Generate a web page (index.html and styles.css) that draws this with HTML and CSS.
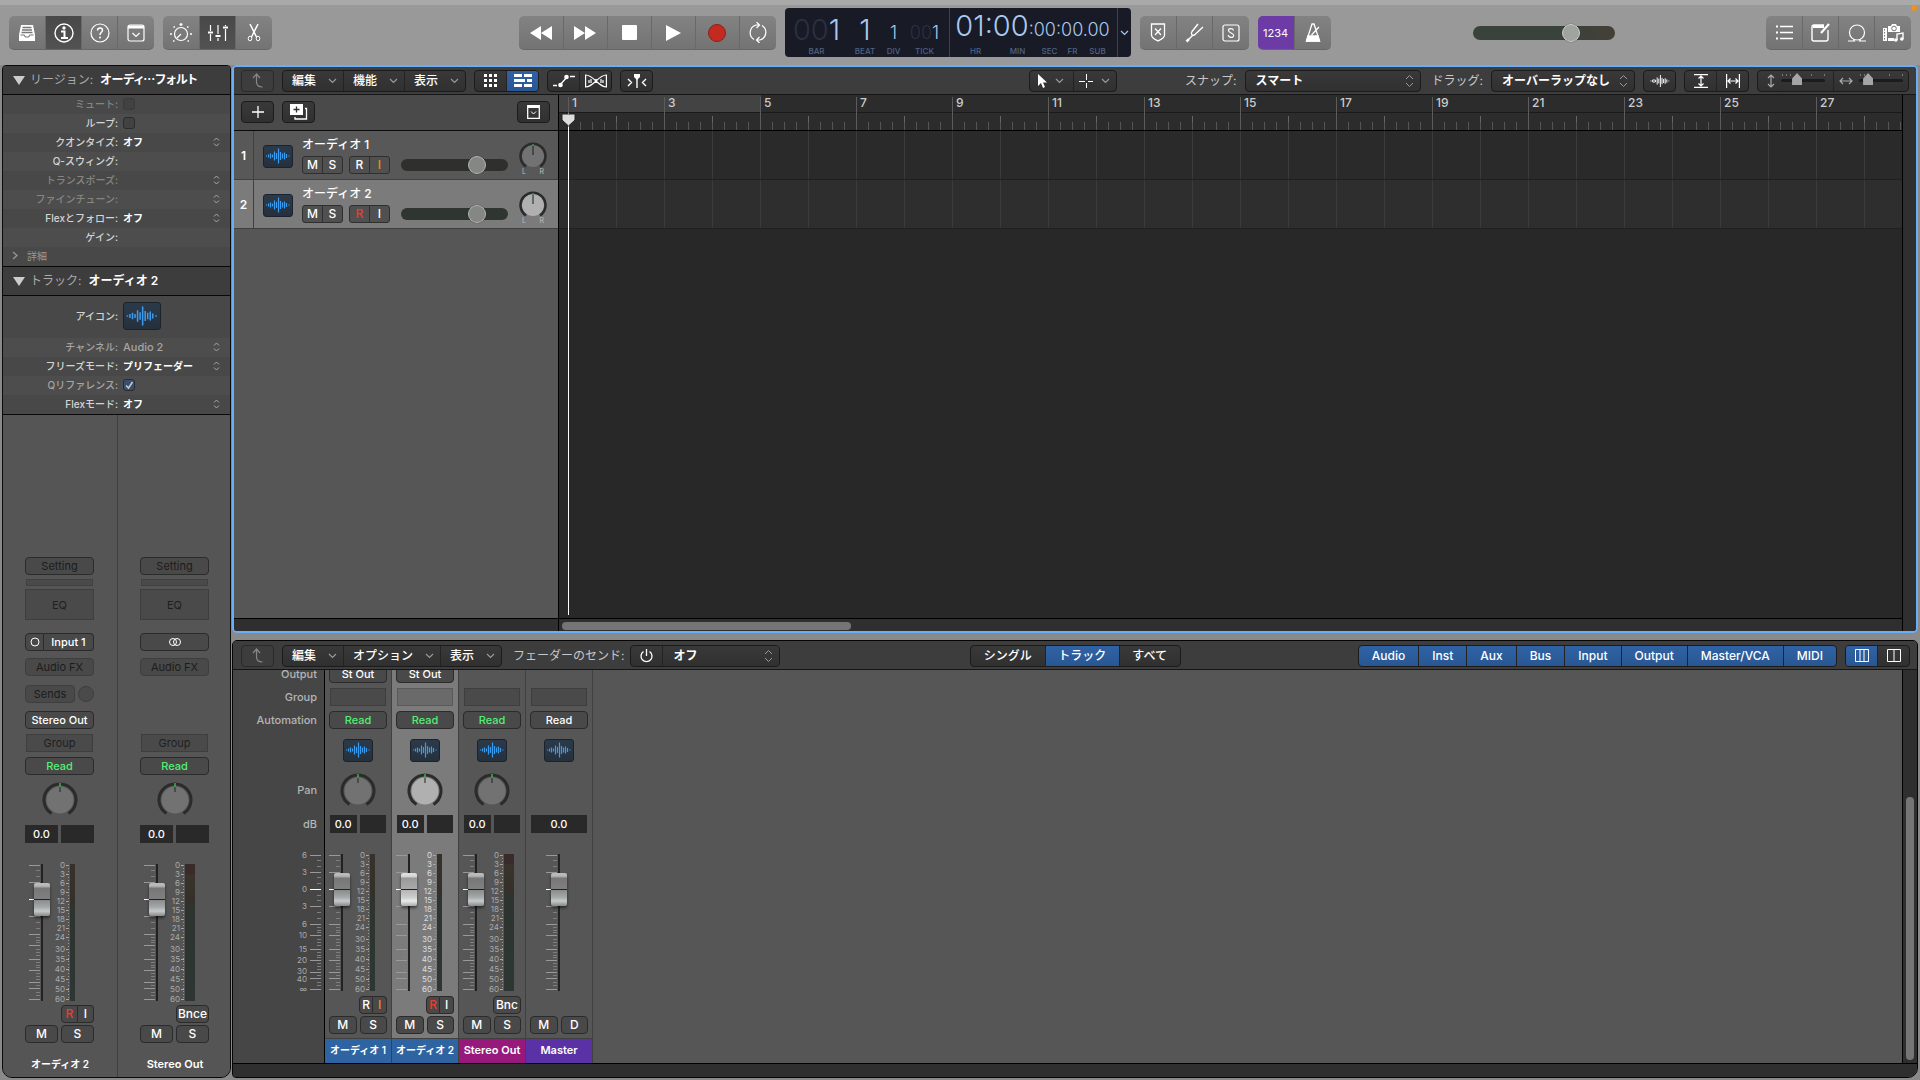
FILE: index.html
```html
<!DOCTYPE html>
<html lang="ja">
<head>
<meta charset="utf-8">
<title>オーディオ 2</title>
<link rel="stylesheet" href="styles.css">
</head>
<body>
<svg class="defs" aria-hidden="true">
  <symbol id="chev" viewBox="0 0 9 6"><path d="M1 1l3.500 3.500L8 1" fill="none" stroke="currentColor" stroke-width="1.200"/></symbol>
  <symbol id="up" viewBox="0 0 14 16"><path d="M2 5l3.500-4L9 5M5.500 1v8c0 3.500 2 5 6 5" fill="none" stroke="currentColor" stroke-width="1.200"/></symbol>
  <symbol id="wave" viewBox="0 0 30 22"><path d="M3.500 10.500v1M5.500 9.500v3M7.500 8.500v5M9.500 9.500v3M11.500 6.500v9M13.500 8v6M15.500 3.500v15M17.500 7v8M19.500 8.500v5M21.500 7.500v7M23.500 9v4M26 10.500v1" stroke="currentColor" stroke-width="1.200"/></symbol>
  <symbol id="knob" viewBox="0 0 36 34"><circle cx="18" cy="18" r="13.500"/><path d="M9.500 31.500A16 16 0 1 1 26.500 31.500" fill="none" stroke="#2b2b2b" stroke-width="3"/><path d="M18 4v6" stroke="#222"/><path d="M18 1v4" stroke="#3fd65c" stroke-width="1.200"/></symbol>
  <symbol id="knob-s" viewBox="0 0 28 28"><circle cx="14" cy="14" r="11"/><path d="M7 24.500A12.500 12.500 0 1 1 21 24.500" fill="none" stroke="#2b2b2b" stroke-width="2.500"/><path d="M14 3v10" stroke="#1d1d1d"/><path d="M14 2v2" stroke="#3fd65c"/></symbol>
  <symbol id="ticks" viewBox="0 0 16 148"><path d="M0 7.500h11M0 24.500h11M0 58.500h11M0 76.500h11M0 87.500h11M0 101.500h11M0 112.500h11M0 124.500h11M0 130.500h11M0 141.500h11" stroke="#999"/><path d="M7 12.500h4M7 18.500h4M7 29.500h4M7 35.500h4M7 47.500h4M7 52.500h4M7 64.500h4M7 70.500h4M7 79.500h4M7 82.500h4M7 84.500h4M7 91.500h4M7 94.500h4M7 97.500h4M7 104.500h4M7 107.500h4M7 109.500h4M7 115.500h4M7 118.500h4M7 121.500h4M7 127.500h4M7 134.500h4M7 137.500h4" stroke="#7e7e7e"/><path d="M0 41.500h11" stroke="#fff"/></symbol>
  <symbol id="slot" viewBox="0 0 16 148"><rect x="12" y="6" width="2" height="137" fill="#222"/></symbol>
  <symbol id="scale" viewBox="0 0 44 148">
    <path d="M37 7.500h3M37 16.500h3M37 25.500h3M37 34.500h3M37 43.500h3M37 52.500h3M37 61.500h3M37 70.500h3M37 79.500h3M37 91.500h3M37 101.500h3M37 111.500h3M37 121.500h3M37 131.500h3M37 141.500h3" stroke="#aaa"/>
    <path d="M39.500 7v135" stroke="#999" stroke-dasharray="1 2"/></symbol>
  <linearGradient id="lvl" x1="0" y1="0" x2="0" y2="1"><stop offset="0" stop-color="#37312c"/><stop offset=".28" stop-color="#343029"/><stop offset=".32" stop-color="#2d342f"/><stop offset="1" stop-color="#2e3633"/></linearGradient>
  <linearGradient id="lvlw" x1="0" y1="0" x2="0" y2="1"><stop offset="0" stop-color="#3a2b2b"/><stop offset=".07" stop-color="#3a2b2b"/><stop offset=".08" stop-color="#39332b"/><stop offset=".28" stop-color="#343029"/><stop offset=".32" stop-color="#2d342f"/><stop offset="1" stop-color="#2e3633"/></linearGradient>
</svg>

<header class="topbar">
  <div class="tb">
    <button aria-label="ライブラリ"><svg width="18" height="18" viewBox="0 0 18 18"><path d="M3 1h12l2 10v6H1v-6z" fill="#fff"/><path d="M4.500 3.500h9M4 6h10M3.500 8.500h11" stroke="#777" stroke-width="1.300"/><path d="M2.500 11H6l1.500 2h3L12 11h3.500" fill="none" stroke="#777" stroke-width="1.200"/></svg></button>
    <button class="dk" aria-label="インスペクタ"><svg width="20" height="20" viewBox="0 0 20 20" fill="none" stroke="#fff"><circle cx="10" cy="10" r="9" stroke-width="1.400"/><path d="M7 8.500h3.500V15M7 15h7" stroke-width="2"/><circle cx="10" cy="5" r="1.700" fill="#fff" stroke="none"/></svg></button>
    <button aria-label="クイックヘルプ"><svg width="20" height="20" viewBox="0 0 20 20" fill="none" stroke="#fff"><circle cx="10" cy="10" r="9" stroke-width="1.200"/><path d="M7.500 7.500c.2-3.500 5.300-3.200 5 0-.2 1.800-2.500 1.800-2.500 4.500" stroke-width="1.500"/><circle cx="10" cy="14.500" r="1" fill="#fff" stroke="none"/></svg></button>
    <button aria-label="ツールバー"><svg width="18" height="18" viewBox="0 0 18 18" fill="none" stroke="#fff"><rect x="1" y="1" width="16" height="16" rx="2" stroke-width="1.200"/><path d="M1 3h16" stroke-width="3"/><path d="M5.500 9l3.500 3.500L12.500 9" stroke-width="1.200"/></svg></button>
  </div>
  <div class="tb">
    <button aria-label="Smart Control"><svg width="22" height="20" viewBox="0 0 22 20" fill="none" stroke="#fff"><circle cx="11" cy="11" r="6.500" stroke-width="1.200"/><path d="M7 15l4-4" stroke-width="1.200"/><path d="M11 0v3M9.500 1.500h3M3.500 4h1.500M17 4h1.500M0 11h2M20 11h2M3 18h1.500M17.500 18H19" stroke-width="1.300"/></svg></button>
    <button class="dk" aria-label="ミキサー"><svg width="20" height="20" viewBox="0 0 20 20" stroke="#fff"><path d="M2.500 2v6M2.500 11v7M10 2v9M10 15v3M17.500 2v1M17.500 6v12" stroke-width="1.200"/><path d="M0 9.500h5M7.500 13h5M15 4.500h5" stroke-width="2"/></svg></button>
    <button aria-label="エディタ"><svg width="14" height="19" viewBox="0 0 14 19" fill="none" stroke="#fff"><path d="M3 1l6.500 13M11 1L4.500 14" stroke-width="1.500"/><ellipse cx="3" cy="15.500" rx="1.800" ry="2.300"/><ellipse cx="11" cy="15.500" rx="1.800" ry="2.300"/></svg></button>
  </div>
  <span class="sp25"></span>
  <div class="tb transport">
    <button aria-label="巻き戻し"><svg width="22" height="14" viewBox="0 0 22 14"><path d="M11 0v14L0 7zM22 0v14L11 7z" fill="#fff"/></svg></button>
    <button aria-label="早送り"><svg width="22" height="14" viewBox="0 0 22 14"><path d="M0 0v14l11-7zM11 0v14l11-7z" fill="#fff"/></svg></button>
    <button aria-label="停止"><svg width="15" height="15"><rect width="15" height="15" rx="1" fill="#fff"/></svg></button>
    <button aria-label="再生"><svg width="15" height="16"><path d="M0 0v16l15-8z" fill="#fff"/></svg></button>
    <button aria-label="録音"><svg width="18" height="18"><circle cx="9" cy="9" r="8.500" fill="#c32a20" stroke="#8c211b"/></svg></button>
    <button class="cyc" aria-label="サイクル"><svg width="20" height="21" viewBox="0 0 20 21" fill="none" stroke="#fff" stroke-width="1.200"><path d="M6 17.500A8 8 0 0 1 8 3h3.500M14 3.500A8 8 0 0 1 12 18H8.500M8.500 0l3 3-3 3M11.500 15l-3 3 3 3"/></svg></button>
  </div>
  <div class="lcd">
    <div class="pos">
      <span class="big"><i>00</i>1</span><span class="big">1</span><span class="sml">1</span><span class="sml"><i>00</i>1</span>
      <small>BAR</small><small>BEAT</small><small>DIV</small><small>TICK</small>
    </div>
    <div class="time">
      <span class="clock"><span class="big">01:00</span><span class="sml">:00:00.00</span></span>
      <small>HR</small><small>MIN</small><small>SEC</small><small>FR</small><small>SUB</small>
    </div>
    <button aria-label="表示モード"><svg width="9" height="6"><use href="#chev"/></svg></button>
  </div>
  <div class="tb">
    <button aria-label="置き換え"><svg width="16" height="19" viewBox="0 0 16 19" fill="none" stroke="#fff" stroke-width="1.300"><path d="M1.500 1h13v11c0 3-3.500 4.500-6.500 6-3-1.500-6.500-3-6.500-6zM5 5.500l6 6.500M11 5.500L5 12"/></svg></button>
    <button aria-label="チューナー"><svg width="19" height="20" viewBox="0 0 19 20" fill="none" stroke="#fff" stroke-width="1.400"><path d="M13 1L7 8.500C5.500 11 7 13 9.500 12L18 4M8 12l-4 4"/><path d="M4 16l-2.500 2.500" stroke-width="2.500"/></svg></button>
    <button aria-label="ソロ"><svg width="18" height="18" viewBox="0 0 18 18" fill="none" stroke="#fff" stroke-width="1.200"><rect x="1" y="1" width="16" height="16" rx="2"/><path d="M11.500 6.500C11 4 6.500 4 6.500 6.500S11.700 9 11.700 11.500 6.500 14 6.300 11"/></svg></button>
  </div>
  <div class="tb">
    <button class="pp">1234</button>
    <button aria-label="メトロノーム"><svg width="16" height="19" viewBox="0 0 16 19" fill="none" stroke="#fff" stroke-width="1.300"><path d="M7 1L1.500 18h13L9 1zM6.500 12l7.500-8"/><path d="M3 13h10l1.500 5h-13z" fill="#fff"/></svg></button>
  </div>
  <span class="sp14"></span>
  <input class="vol master" type="range" value="72" aria-label="マスター音量">
  <span class="sp15"></span>
  <div class="tb last">
    <button aria-label="リスト"><svg width="17" height="15" viewBox="0 0 17 15" stroke="#fff" stroke-width="1.300"><path d="M4 1.500h13M4 7.500h13M4 13.500h13"/><path d="M0 1.500h2M0 7.500h2M0 13.500h2" stroke-width="2"/></svg></button>
    <button aria-label="メモパッド"><svg width="19" height="19" viewBox="0 0 19 19" fill="none" stroke="#fff"><path d="M13 2H3a2 2 0 0 0-2 2v12a2 2 0 0 0 2 2h12a2 2 0 0 0 2-2V7" stroke-width="1.400"/><path d="M2 3.500h11" stroke-width="3"/><path d="M18 1l-8 9" stroke-width="2.200"/></svg></button>
    <button aria-label="ループ"><svg width="18" height="18" viewBox="0 0 18 18" fill="none" stroke="#fff" stroke-width="1.200"><circle cx="9" cy="8.500" r="7.500"/><path d="M0 17h6.500l-1-1.500M18 17h-6.500l1-1.500"/></svg></button>
    <button aria-label="ブラウザ"><svg width="21" height="19" viewBox="0 0 21 19"><path d="M0 5h4v13H0zM11 15v3H5v-3z" fill="#fff"/><path d="M1.500 6v12" stroke="#777" stroke-dasharray="1.500 1.500"/><path d="M5 3h3l1-2h4l1 2h3v6H5z" fill="#fff"/><circle cx="11" cy="5.500" r="2.300" fill="#fff" stroke="#777"/><path d="M14 17v-6l6-1v6" fill="none" stroke="#fff" stroke-width="1.400"/><circle cx="12.800" cy="17" r="1.800" fill="#fff"/><circle cx="18.800" cy="16" r="1.800" fill="#fff"/></svg></button>
  </div>
  <span class="dot"></span>
</header>

<main class="main">
<aside class="inspector">
  <h2><b class="tri"></b>リージョン:<strong class="tight">オーディ⋯フォルト</strong></h2>
  <div class="props">
    <div class="row off"><label for="p1">ミュート:</label><input id="p1" type="checkbox" disabled></div>
    <div class="row"><label for="p2">ループ:</label><input id="p2" type="checkbox"></div>
    <div class="row"><label for="p3">クオンタイズ:</label><select id="p3"><option>オフ</option></select></div>
    <div class="row"><label>Q-スウィング:</label></div>
    <div class="row off"><label for="p5">トランスポーズ:</label><select id="p5"><option></option></select></div>
    <div class="row off"><label for="p6">ファインチューン:</label><select id="p6"><option></option></select></div>
    <div class="row"><label for="p7">Flexとフォロー:</label><select id="p7"><option>オフ</option></select></div>
    <div class="row"><label>ゲイン:</label></div>
    <div class="row more"><svg width="6" height="9" viewBox="0 0 6 9"><path d="M1 1l4 3.500L1 8" fill="none" stroke="currentColor" stroke-width="1.200"/></svg>詳細</div>
  </div>
  <h2><b class="tri"></b>トラック:<strong>オーディオ 2</strong></h2>
  <div class="props">
    <div class="row tall"><label>アイコン:</label><span class="ic lg"><svg width="38" height="28"><use href="#wave"/></svg></span></div>
    <div class="row dim"><label for="q1">チャンネル:</label><select id="q1" class="lat"><option>Audio 2</option></select></div>
    <div class="row"><label for="q2">フリーズモード:</label><select id="q2"><option>プリフェーダー</option></select></div>
    <div class="row dim"><label for="q3">Qリファレンス:</label><input id="q3" type="checkbox" checked></div>
    <div class="row"><label for="q4">Flexモード:</label><select id="q4"><option>オフ</option></select></div>
  </div>
  <div class="strips">
    <section class="istrip">
      <button class="slot faint">Setting</button>
      <span class="thin"></span>
      <button class="box eq">EQ</button>
      <span class="pair"><button class="slot inm" aria-label="モノ"><svg width="10" height="10"><circle cx="5" cy="5" r="4" fill="none" stroke="#fff"/></svg></button><button class="slot">Input 1</button></span>
      <button class="slot ghost">Audio FX</button>
      <span class="sends"><button class="slot ghost">Sends</button><i></i></span>
      <button class="slot">Stereo Out</button>
      <button class="box">Group</button>
      <button class="slot read">Read</button>
      <svg class="knob" width="36" height="34"><use href="#knob"/></svg>
      <span class="db"><output>0.0</output><output></output></span>
      <div class="fader"><svg width="16" height="148"><use href="#ticks"/><use href="#slot"/></svg><svg width="52" height="148"><g class="nums"><text x="36" y="10">0</text><text x="36" y="19">3</text><text x="36" y="28">6</text><text x="36" y="37">9</text><text x="36" y="46">12</text><text x="36" y="55">15</text><text x="36" y="64">18</text><text x="36" y="73">21</text><text x="36" y="82">24</text><text x="36" y="94">30</text><text x="36" y="104">35</text><text x="36" y="114">40</text><text x="36" y="124">45</text><text x="36" y="134">50</text><text x="36" y="144">60</text></g><use href="#scale" width="44"/><rect x="41" y="6" width="5" height="137" fill="url(#lvl)"/></svg><input type="range" value="82" aria-label="オーディオ 2 音量"></div>
      <span class="pair ri"><button class="slot red">R</button><button class="slot">I</button></span>
      <span class="ms"><button class="slot">M</button><button class="slot">S</button></span>
      <h3>オーディオ 2</h3>
    </section>
    <section class="istrip">
      <button class="slot faint">Setting</button>
      <span class="thin"></span>
      <button class="box eq">EQ</button>
      <button class="slot" aria-label="ステレオ"><svg width="14" height="10"><g fill="none" stroke="#fff"><circle cx="5" cy="5" r="3.500"/><circle cx="9" cy="5" r="3.500"/></g></svg></button>
      <button class="slot ghost">Audio FX</button>
      <span></span>
      <span></span>
      <button class="box">Group</button>
      <button class="slot read">Read</button>
      <svg class="knob" width="36" height="34"><use href="#knob"/></svg>
      <span class="db"><output>0.0</output><output></output></span>
      <div class="fader"><svg width="16" height="148"><use href="#ticks"/><use href="#slot"/></svg><svg width="52" height="148"><g class="nums"><text x="36" y="10">0</text><text x="36" y="19">3</text><text x="36" y="28">6</text><text x="36" y="37">9</text><text x="36" y="46">12</text><text x="36" y="55">15</text><text x="36" y="64">18</text><text x="36" y="73">21</text><text x="36" y="82">24</text><text x="36" y="94">30</text><text x="36" y="104">35</text><text x="36" y="114">40</text><text x="36" y="124">45</text><text x="36" y="134">50</text><text x="36" y="144">60</text></g><use href="#scale" width="44"/><rect x="41" y="6" width="10" height="137" fill="url(#lvlw)"/></svg><input type="range" value="82" aria-label="Stereo Out 音量"></div>
      <span class="ri"><button class="slot">Bnce</button></span>
      <span class="ms"><button class="slot">M</button><button class="slot">S</button></span>
      <h3 class="lat">Stereo Out</h3>
    </section>
  </div>
</aside>

<div class="right">
<section class="tracks">
  <div class="bar">
    <button class="seg one upb" aria-label="戻る"><svg width="14" height="16"><use href="#up"/></svg></button>
    <div class="seg menus"><button>編集<svg width="9" height="6"><use href="#chev"/></svg></button><button>機能<svg width="9" height="6"><use href="#chev"/></svg></button><button>表示<svg width="9" height="6"><use href="#chev"/></svg></button></div>
    <div class="seg ics"><button aria-label="グリッド"><svg width="13" height="13" fill="#fff"><path d="M0 0h3v3H0zM5 0h3v3H5zM10 0h3v3h-3zM0 5h3v3H0zM5 5h3v3H5zM10 5h3v3h-3zM0 10h3v3H0zM5 10h3v3H5zM10 10h3v3h-3z"/></svg></button><button class="on" aria-label="トラック"><svg width="18" height="13" fill="#fff"><path d="M0 0h8v3H0zM10 0h8v3h-8zM0 5h11v3H0zM13 5h5v3h-5zM0 10h8v3H0zM10 10h8v3h-8z"/></svg></button></div>
    <div class="seg ics"><button aria-label="オートメーション"><svg width="22" height="14" viewBox="0 0 22 14"><path d="M0 11.500h4M7 11l7-8M17 2.500h5" stroke="#fff" stroke-width="1.300"/><circle cx="7.500" cy="11" r="2.300" fill="#fff"/><circle cx="13.500" cy="3" r="2.300" fill="#fff"/></svg></button><button aria-label="Flex"><svg width="22" height="14" viewBox="0 0 22 14" fill="none" stroke="#fff" stroke-width="1.200"><path d="M.6 1v12C9 13 13 1 21.400 1v12C13 13 9 1 .6 1zM4 6v3M6 5v4M11 5v4M16 5v4M18 6v3"/></svg></button></div>
    <button class="seg one" aria-label="キャッチ"><svg width="20" height="14" viewBox="0 0 20 14" fill="none" stroke="#fff" stroke-width="1.400"><path d="M1 5l3.500 3.500L1 12M19 5l-3.500 3.500L19 12M10 3v11"/><path d="M7 0h6v3l-3 3-3-3z" fill="#fff" stroke="none"/></svg></button>
    <span class="sp-a"></span>
    <div class="seg tools"><button aria-label="ポインタ"><svg width="9" height="14"><path d="M0 0v12l3-3 2 5 2-1-2-4.500h4z" fill="#fff"/></svg><svg width="9" height="6"><use href="#chev"/></svg></button><button aria-label="マーキー"><svg width="14" height="14" stroke="#fff"><path d="M7.500 0v6M7.500 9v5M0 7.500h6M9 7.500h5"/></svg><svg width="9" height="6"><use href="#chev"/></svg></button></div>
    <span class="sp-b"></span>
    <label for="snap">スナップ:</label><select class="seg sel w-snap" id="snap"><option>スマート</option></select>
    <label for="drag" class="l-drag">ドラッグ:</label><select class="seg sel w-drag" id="drag"><option>オーバーラップなし</option></select>
    <button class="seg one wv" aria-label="波形"><svg width="24" height="20"><use href="#wave"/></svg></button>
    <div class="seg ics"><button aria-label="縦ズーム"><svg width="14" height="14" fill="none" stroke="#fff" stroke-width="1.200"><path d="M0 .6h14M0 13.400h14M7 2v10M4.500 4.500L7 2l2.500 2.500M4.500 9.500L7 12l2.500-2.500"/></svg></button><button aria-label="横ズーム"><svg width="14" height="14" fill="none" stroke="#fff" stroke-width="1.200"><path d="M.6 0v14M13.400 0v14M2 7h10M4.500 4.500L2 7l2.500 2.500M9.500 4.500L12 7 9.500 9.500"/></svg></button></div>
    <div class="seg zooms"><span><svg width="8" height="14" fill="none" stroke="#aaa" stroke-width="1.200"><path d="M4 1v12M1 4l3-3 3 3M1 10l3 3 3-3"/></svg><input class="zm" type="range" value="34" aria-label="縦ズーム"></span><span><svg width="14" height="8" fill="none" stroke="#aaa" stroke-width="1.200"><path d="M1 4h12M4 1L1 4l3 3M10 1l3 3-3 3"/></svg><input class="zm" type="range" value="12" aria-label="横ズーム"></span></div>
  </div>
  <div class="arr">
    <div class="heads">
      <div class="addbar">
        <button class="seg one" aria-label="トラックを追加"><svg width="12" height="12" stroke="#fff" stroke-width="1.300"><path d="M6 0v12M0 6h12"/></svg></button>
        <button class="seg one" aria-label="トラックを複製"><svg width="18" height="16" viewBox="0 0 18 16" fill="none"><path d="M0 0h13v11H0z" fill="#fff"/><path d="M6.500 2.500v6M3.500 5.500h6" stroke="#333" stroke-width="1.300"/><path d="M15 4.500h1.500V15H5v-2" stroke="#fff" stroke-width="1.300"/></svg></button>
        <button class="seg one end" aria-label="ヘッダの構成"><svg width="13" height="14" fill="none" stroke="#fff"><path d="M.7.700h11.600v12.600H.7z" stroke-width="1.300"/><path d="M1 2h11" stroke-width="2"/><path d="M4 6.500L6.500 9 9 6.500"/></svg></button>
      </div>
      <div class="track">
        <b>1</b><span class="ic"><svg width="30" height="22"><use href="#wave"/></svg></span>
        <div class="tbody"><h3>オーディオ 1</h3><div class="ctl"><span class="mini"><button>M</button><button>S</button></span><span class="mini"><button>R</button><button class="or">I</button></span><input class="vol" type="range" value="75" aria-label="オーディオ 1 音量"></div></div>
        <div class="pan"><svg width="28" height="28"><use href="#knob-s"/></svg><small><span>L</span><span>R</span></small></div>
      </div>
      <div class="track sel-t">
        <b>2</b><span class="ic"><svg width="30" height="22"><use href="#wave"/></svg></span>
        <div class="tbody"><h3>オーディオ 2</h3><div class="ctl"><span class="mini"><button>M</button><button>S</button></span><span class="mini"><button class="red">R</button><button>I</button></span><input class="vol green" type="range" value="75" aria-label="オーディオ 2 音量"></div></div>
        <div class="pan"><svg width="28" height="28"><use href="#knob-s"/></svg><small><span>L</span><span>R</span></small></div>
      </div>
      <div class="foot"></div>
    </div>
    <div class="lanes">
      <div class="ruler"><span>1</span><span>3</span><span>5</span><span>7</span><span>9</span><span>11</span><span>13</span><span>15</span><span>17</span><span>19</span><span>21</span><span>23</span><span>25</span><span>27</span></div>
      <div class="lane"></div>
      <div class="lane"></div>
      <div class="foot"><span class="thumb"></span></div>
      <div class="playhead"><svg width="15" height="14" viewBox="0 0 15 14"><path d="M1 1h13v6l-6.500 6L1 7z" fill="#ddd" stroke="#222"/></svg></div>
    </div>
    <div class="vbar"></div>
  </div>
</section>

<section class="mixer">
  <div class="bar">
    <button class="seg one upb" aria-label="戻る"><svg width="14" height="16"><use href="#up"/></svg></button>
    <div class="seg menus wide"><button>編集<svg width="9" height="6"><use href="#chev"/></svg></button><button class="w-opt">オプション<svg width="9" height="6"><use href="#chev"/></svg></button><button>表示<svg width="9" height="6"><use href="#chev"/></svg></button></div>
    <label for="send">フェーダーのセンド:</label>
    <div class="seg send"><button aria-label="電源"><svg width="13" height="14" fill="none" stroke="#fff" stroke-width="1.300"><path d="M6.500 0v7M3.500 2.500a5.500 5.500 0 1 0 6 0"/></svg></button><select class="sel" id="send"><option>オフ</option></select></div>
    <span class="sp-c"></span>
    <div class="seg tabs"><button>シングル</button><button class="on">トラック</button><button class="t3">すべて</button></div>
    <span class="sp-d"></span>
    <div class="seg filt"><button>Audio</button><button>Inst</button><button>Aux</button><button>Bus</button><button>Input</button><button>Output</button><button>Master/VCA</button><button>MIDI</button></div>
    <div class="seg ics"><button class="on" aria-label="細い表示"><svg width="14" height="13" fill="none" stroke="#fff"><path d="M.5.500h13v12H.5zM5 .5v12M9 .5v12"/></svg></button><button aria-label="広い表示"><svg width="14" height="13" fill="none" stroke="#fff"><path d="M.5.500h13v12H.5zM7 .5v12"/></svg></button></div>
  </div>
  <div class="mbody">
    <div class="mview">
      <div class="mlabels">
        <span>Output</span><span>Group</span><span>Automation</span><span></span><span>Pan</span><span>dB</span>
        <svg width="40" height="148"><g class="nums"><text x="18" y="10">6</text><text x="18" y="27">3</text><text x="18" y="44">0</text><text x="18" y="61">3</text><text x="18" y="79">6</text><text x="18" y="90">10</text><text x="18" y="104">15</text><text x="18" y="115">20</text><text x="18" y="126">30</text><text x="18" y="134">40</text><text x="18" y="144">∞</text></g><use href="#ticks" x="21" width="16" height="148"/></svg>
      </div>
      <section class="mstrip">
        <button class="slot">St Out</button><button class="box" aria-label="Group"></button><button class="slot read">Read</button>
        <span class="ic"><svg width="30" height="22"><use href="#wave"/></svg></span>
        <svg class="knob" width="36" height="34"><use href="#knob"/></svg>
        <span class="db"><output>0.0</output><output></output></span>
        <div class="fader"><svg width="16" height="148"><use href="#ticks"/><use href="#slot"/></svg><svg width="52" height="148"><g class="nums"><text x="36" y="10">0</text><text x="36" y="19">3</text><text x="36" y="28">6</text><text x="36" y="37">9</text><text x="36" y="46">12</text><text x="36" y="55">15</text><text x="36" y="64">18</text><text x="36" y="73">21</text><text x="36" y="82">24</text><text x="36" y="94">30</text><text x="36" y="104">35</text><text x="36" y="114">40</text><text x="36" y="124">45</text><text x="36" y="134">50</text><text x="36" y="144">60</text></g><use href="#scale" width="44"/><rect x="41" y="6" width="5" height="137" fill="url(#lvl)"/></svg><input type="range" value="82" aria-label="オーディオ 1 音量"></div>
        <span class="pair ri"><button class="slot">R</button><button class="slot or">I</button></span>
        <span class="ms"><button class="slot">M</button><button class="slot">S</button></span>
        <h3 class="blue">オーディオ 1</h3>
      </section>
      <section class="mstrip lit">
        <button class="slot">St Out</button><button class="box" aria-label="Group"></button><button class="slot read">Read</button>
        <span class="ic"><svg width="30" height="22"><use href="#wave"/></svg></span>
        <svg class="knob" width="36" height="34"><use href="#knob"/></svg>
        <span class="db"><output>0.0</output><output></output></span>
        <div class="fader"><svg width="16" height="148"><use href="#ticks"/><use href="#slot"/></svg><svg width="52" height="148"><g class="nums"><text x="36" y="10">0</text><text x="36" y="19">3</text><text x="36" y="28">6</text><text x="36" y="37">9</text><text x="36" y="46">12</text><text x="36" y="55">15</text><text x="36" y="64">18</text><text x="36" y="73">21</text><text x="36" y="82">24</text><text x="36" y="94">30</text><text x="36" y="104">35</text><text x="36" y="114">40</text><text x="36" y="124">45</text><text x="36" y="134">50</text><text x="36" y="144">60</text></g><use href="#scale" width="44"/><rect x="41" y="6" width="5" height="137" fill="url(#lvl)"/></svg><input type="range" value="82" aria-label="オーディオ 2 音量"></div>
        <span class="pair ri"><button class="slot red">R</button><button class="slot">I</button></span>
        <span class="ms"><button class="slot">M</button><button class="slot">S</button></span>
        <h3 class="blue">オーディオ 2</h3>
      </section>
      <section class="mstrip">
        <span></span><button class="box" aria-label="Group"></button><button class="slot read">Read</button>
        <span class="ic"><svg width="30" height="22"><use href="#wave"/></svg></span>
        <svg class="knob" width="36" height="34"><use href="#knob"/></svg>
        <span class="db"><output>0.0</output><output></output></span>
        <div class="fader"><svg width="16" height="148"><use href="#ticks"/><use href="#slot"/></svg><svg width="52" height="148"><g class="nums"><text x="36" y="10">0</text><text x="36" y="19">3</text><text x="36" y="28">6</text><text x="36" y="37">9</text><text x="36" y="46">12</text><text x="36" y="55">15</text><text x="36" y="64">18</text><text x="36" y="73">21</text><text x="36" y="82">24</text><text x="36" y="94">30</text><text x="36" y="104">35</text><text x="36" y="114">40</text><text x="36" y="124">45</text><text x="36" y="134">50</text><text x="36" y="144">60</text></g><use href="#scale" width="44"/><rect x="41" y="6" width="10" height="137" fill="url(#lvlw)"/></svg><input type="range" value="82" aria-label="Stereo Out 音量"></div>
        <span class="ri"><button class="slot">Bnc</button></span>
        <span class="ms"><button class="slot">M</button><button class="slot">S</button></span>
        <h3 class="pink lat">Stereo Out</h3>
      </section>
      <section class="mstrip">
        <span></span><button class="box" aria-label="Group"></button><button class="slot">Read</button>
        <span class="ic"><svg width="30" height="22"><use href="#wave"/></svg></span>
        <span></span>
        <span class="db"><output>0.0</output></span>
        <div class="fader mid"><svg width="16" height="148"><use href="#ticks"/><use href="#slot"/></svg><input type="range" value="82" aria-label="Master 音量"></div>
        <span></span>
        <span class="ms"><button class="slot">M</button><button class="slot">D</button></span>
        <h3 class="violet lat">Master</h3>
      </section>
    </div>
    <div class="vbar"><span class="thumb"></span></div>
  </div>
  <div class="mfoot"></div>
</section>
</div>
</main>
</body>
</html>
```
FILE: styles.css
```css
* { box-sizing: border-box; }
body {
  margin: 0; min-height: 100vh; display: flex; flex-direction: column;
  background: #8a8a8a; color: #fff; overflow-x: hidden;
  font: 12px/16px Inter, "Noto Sans CJK JP", sans-serif;
}
.defs { position: absolute; width: 0; height: 0; }
button, select, input { font: inherit; color: inherit; margin: 0; padding: 0; border: 0; background: none; border-radius: 0; }
button { display: flex; align-items: center; justify-content: center; white-space: nowrap; }
h2, h3 { margin: 0; font: inherit; }
svg { display: block; flex: none; }
i { font-style: normal; }

/* control bar */
.topbar { position: relative; display: flex; align-items: flex-start; gap: 9px; height: 65px; padding: 11px 9px 0; background: #999; border-top: 5px solid #a9a9a9; }
.tb { display: flex; height: 34px; border-radius: 5px; overflow: hidden; background: linear-gradient(#838383, #737373); border-bottom: 1px solid #666; }
.tb button { width: 36px; }
.tb button + button { border-left: 1px solid #696969; }
.tb button:last-child { width: 37px; }
.tb .dk { background: linear-gradient(#484848, #525252); }
.tb .pp { background: #6d3ba5; font-size: 11px; width: 36px; }
.transport button { width: 44px; }
.transport .cyc { width: 37px; }
.sp25 { flex: 25; margin-right: -9px; }
.sp14 { flex: 14; margin-right: -9px; }
.sp15 { flex: 15; margin-right: -9px; }
.dot { position: absolute; right: 3px; top: 0; width: 6px; height: 6px; border-radius: 50%; background: #ee9120; }

.lcd { display: flex; height: 49px; margin-top: -8px; background: #181a26; border-radius: 4px; color: #a8c9ee; font-weight: 300; }
.lcd .pos, .lcd .time { display: grid; grid-template-rows: 38px 10px; justify-items: center; align-items: end; }
.pos { grid-template-columns: 54px 43px 14px 48px; padding-left: 5px; border-right: 1px solid #34435c; }
.time { grid-template-columns: 40px 44px 20px 26px 24px; padding: 0 7px 0 6px; border-right: 1px solid #34435c; }
.lcd .big { font-size: 29px; line-height: 32px; }
.lcd .sml { font-size: 18px; line-height: 26px; }
.lcd i { color: #2b3040; }
.lcd small { font-size: 8px; line-height: 10px; color: #4e6483; font-weight: 500; }
.clock { grid-column: 1 / -1; display: flex; align-items: baseline; white-space: nowrap; }
.lcd .clock .sml { line-height: 32px; }
.lcd button { width: 13px; }

.vol { appearance: none; width: 107px; height: 18px; background: none; }
.vol::-webkit-slider-runnable-track { height: 12px; border-radius: 6px; background: #2f302d; }
.vol.green::-webkit-slider-runnable-track { background: #2f3632; }
.vol::-webkit-slider-thumb { appearance: none; width: 18px; height: 18px; margin-top: -3px; border-radius: 50%; background: #848783; border: 1px solid #b5b5b5; box-shadow: 0 0 1px #222; }
.vol.master { width: 142px; margin-top: 8px; }
.vol.master::-webkit-slider-runnable-track { height: 14px; border-radius: 7px; background: linear-gradient(90deg, #3a423c 65%, #434036); }
.vol.master::-webkit-slider-thumb { margin-top: -2px; background: #a0a3a0; border-color: #d0d0d0; }

.main { flex: 1; display: grid; grid-template-columns: 229px minmax(0, 1fr); gap: 1px; padding: 0 2px 2px; }

/* inspector */
.inspector { display: flex; flex-direction: column; background: #555; border: 1px solid #0a0a0a; border-radius: 4px 4px 10px 10px; overflow: hidden; }
.inspector h2 { display: flex; align-items: center; height: 29px; padding-left: 10px; background: #3d3d3d; border-bottom: 1px solid #080808; color: #aaa; white-space: nowrap; }
.props + h2 { border-top: 1px solid #080808; height: 30px; }
h2 strong { margin-left: 7px; color: #fff; font-weight: 600; }
.tight { font-feature-settings: "palt"; }
.tri { width: 0; border: 6px solid transparent; border-top: 9px solid #ccc; border-bottom: 0; margin-right: 5px; }
.row { display: flex; align-items: center; gap: 5px; height: 19px; padding-bottom: 2px; background: #4d4d4d; font-size: 10px; color: #d5d5d5; }
.row:nth-child(odd) { background: #484848; }
.row label { width: 115px; text-align: right; white-space: nowrap; font-weight: 500; }
.row.off { color: #858585; }
.row.dim { color: #a5a5a5; }
.row.tall { height: 42px; }
.row.more { padding-left: 9px; gap: 9px; color: #999; }
.props .row select { flex: 1; height: 17px; margin-right: 10px; appearance: none; font-weight: 600; color: #fff; background: no-repeat right center url("data:image/svg+xml,%3Csvg xmlns='http://www.w3.org/2000/svg' width='7' height='10'%3E%3Cpath d='M1 3.500l2.500-2.500L6 3.500M1 6.500l2.500 2.500L6 6.500' fill='none' stroke='%23aaa'/%3E%3C/svg%3E"); }
.props .row .lat { font-size: 11px; font-weight: 500; color: #a5a5a5; }
.row input { appearance: none; width: 12px; height: 12px; border: 1px solid #2c2c2c; border-radius: 3px; background: #424242; }
.row.off input { border-color: #3a3a3a; }
.row input:checked { background: #38506f no-repeat center url("data:image/svg+xml,%3Csvg xmlns='http://www.w3.org/2000/svg' width='10' height='10'%3E%3Cpath d='M2 5.500l2.500 2.500L8.500 2' fill='none' stroke='%23ccc' stroke-width='1.500'/%3E%3C/svg%3E"); }
.ic { display: block; width: 30px; height: 23px; border: 1px solid #1b222b; border-radius: 3px; background: linear-gradient(#2b3a4a, #25303d); color: #3b9bee; }
.ic svg { margin: -1px; }
.ic.lg { width: 38px; height: 28px; }

.strips { flex: 1; display: flex; align-items: flex-end; border-top: 1px solid #0a0a0a; padding-top: 120px; background: linear-gradient(#404040, #404040) 114px 0 / 1px 100% no-repeat #555; }
.istrip { flex: none; width: 115px; display: grid; grid-template-columns: 69px; grid-template-rows: 22px 10px 44px 25px 27px 26px 23px 23px 25px 43px 33px 147px 20px 18px 34px; padding-left: 22px; align-items: start; font-size: 11px; font-weight: 500; }
.slot { height: 18px; border: 1px solid #2b2b2b; border-radius: 4px; background: #494949; width: 100%; font-size: 11px; font-weight: 500; }
.box { height: 18px; border: 1px solid #3e3e3e; background: #4a4a4a; font-size: 11px; color: #1f1f1f; margin: 0 1px; font-weight: 400; }
.eq { height: 31px; margin: 0; }
.thin { height: 7px; border: 1px solid #404040; background: #4a4a4a; margin: 0 1px; }
.faint { color: #1c1c1c; font-weight: 400; }
.ghost { color: #1c1c1c; border-color: #3e3e3e; font-weight: 400; }
.read { color: #54ee74; }
.slot.red, .mini .red { color: #ee3a30; }
.slot.or, .mini .or { color: #f08c14; }
.pair { display: flex; }
.pair .slot + .slot { border-left: 0; border-radius: 0 4px 4px 0; }
.pair .slot:first-child { border-radius: 4px 0 0 4px; }
.pair .inm { width: 19px; flex: none; }
.sends { display: flex; gap: 3px; }
.sends .slot { width: 50px; }
.sends i { width: 16px; height: 16px; margin-top: 1px; border: 1px solid #3e3e3e; border-radius: 50%; background: #4a4a4a; }
.knob { justify-self: center; fill: #727272; }
.lit .knob { fill: #b0b0b0; }
.db { display: flex; gap: 3px; }
.db output { flex: 1; height: 18px; line-height: 18px; background: #292929; text-align: center; }
.ms { display: flex; gap: 3px; }
.ms .slot { flex: 1; }
.ms .slot, .ri .slot { font-size: 12px; }
.ri { justify-self: end; width: 33px; }
.nums { font: 8px Inter, sans-serif; fill: #aaa; text-anchor: end; }
.lit .nums { fill: #ddd; }
.fader { display: grid; grid-template-columns: 100%; justify-items: start; align-items: start; }
.fader > * { grid-area: 1 / 1; }
.istrip .fader { padding-left: 4px; }
.fader input { appearance: none; writing-mode: vertical-lr; direction: rtl; width: 16px; height: 137px; margin: 6px 0 0 5px; }
.fader input::-webkit-slider-runnable-track { background: none; width: 16px; height: 137px; }
.fader input::-webkit-slider-thumb { appearance: none; width: 16px; height: 33px; border-radius: 2px; box-shadow: 0 2px 3px #0008; background: linear-gradient(#bbb 0 2px, #a5a5a5 4px, #777 5px, #808080 16px, #222 16px, #222 17px, #8a8c8c 17px, #a5a8a8 24px, #c5caca 28px, #888 33px); }
.lit .fader input::-webkit-slider-thumb { background: linear-gradient(#ddd 0 2px, #ccc 4px, #999 5px, #aaa 16px, #222 16px, #222 17px, #b5b5b5 17px, #ccc 24px, #e5eaea 28px, #aaa 33px); }
.istrip h3 { padding-top: 13px; text-align: center; font-size: 10px; font-weight: 600; margin-right: -1px; }
.istrip h3.lat { font-size: 11px; }

/* shared tool bars */
.right { display: grid; grid-template-rows: 1fr auto; gap: 7px; }
.bar { display: flex; align-items: center; gap: 8px; height: 28px; padding: 0 7px; background: #3d3d3d; border-bottom: 1px solid #161616; white-space: nowrap; }
.bar label { color: #c8c8c8; }
.seg { display: flex; height: 22px; border: 1px solid #1b1b1b; border-radius: 4px; background: linear-gradient(#393939, #303030); overflow: hidden; font-weight: 500; }
.seg button + button, .seg button + select, .seg span + span { border-left: 1px solid #232323; }
.one { width: 33px; flex: none; }
.upb { background: none; border-color: #2a2a2a; color: #888; }
.menus { width: 184px; }
.menus.wide { width: 220px; }
.menus button { flex: 1; gap: 12px; padding-left: 3px; }
.menus svg, .tools svg + svg { color: #999; }
.menus .w-opt { flex: none; width: 97px; }
.ics { width: 65px; }
.ics button { flex: 1; }
.seg .on, .filt { background: linear-gradient(#3062a4, #285793); }
.tools button { width: 43px; gap: 8px; }
.sp-a { flex: 370; }
.sp-b { flex: 54; }
.sp-c { flex: 173; }
.sp-d { flex: 161; }
.sel { appearance: none; padding-left: 10px; background: no-repeat right 6px center url("data:image/svg+xml,%3Csvg xmlns='http://www.w3.org/2000/svg' width='9' height='14'%3E%3Cpath d='M1 5l3.500-3.500L8 5M1 9l3.500 3.500L8 9' fill='none' stroke='%23999'/%3E%3C/svg%3E"), linear-gradient(#393939, #303030); font-weight: 600; }
.w-snap { width: 176px; }
.w-drag { width: 144px; }
.l-drag { margin-left: 3px; }
.zooms span { display: flex; align-items: center; justify-content: center; gap: 6px; width: 75px; }
.zm { appearance: none; width: 44px; height: 20px; background: radial-gradient(#777, #777) 1px 3px / 1px 2px no-repeat, radial-gradient(#777, #777) 5px 3px / 1px 2px no-repeat, radial-gradient(#777, #777) 9px 3px / 1px 2px no-repeat, radial-gradient(#777, #777) 30px 3px / 1px 2px no-repeat, radial-gradient(#777, #777) 43px 3px / 1px 2px no-repeat; }
.zm::-webkit-slider-runnable-track { height: 3px; border-radius: 2px; background: #1c1c1c; }
.zm::-webkit-slider-thumb { appearance: none; width: 10px; height: 12px; margin-top: -6px; background: #a5a5a5; clip-path: polygon(50% 0, 100% 45%, 100% 100%, 0 100%, 0 45%); }

/* tracks area */
.tracks { display: flex; flex-direction: column; border: 2px solid #6cadf8; border-radius: 5px; overflow: hidden; background: #282828; }
.arr { flex: 1; display: grid; grid-template-columns: 325px minmax(0, 1fr) 14px; }
.heads, .lanes { display: flex; flex-direction: column; }
.heads { background: #565656; border-right: 1px solid #000; }
.addbar { display: flex; align-items: center; gap: 8px; height: 36px; padding: 0 8px 2px 7px; background: #4a4a4a; border-bottom: 1px solid #0a0a0a; }
.end { margin-left: auto; }
.track { display: flex; align-items: center; height: 49px; border-bottom: 1px solid #404040; background: #585858; }
.sel-t { background: #7b7b7b; }
.track > b { width: 20px; align-self: stretch; display: grid; place-items: center; border-right: 1px solid #404040; font-weight: 600; padding-top: 2px; }
.track .ic { margin: 2px 9px 0; }
.tbody { flex: 1; }
.tbody h3 { line-height: 18px; font-weight: 500; margin-bottom: 2px; }
.ctl { display: flex; align-items: center; height: 18px; }
.mini { display: flex; width: 41px; height: 18px; margin-right: 6px; border: 1px solid #2f2f2f; border-radius: 3px; background: #505050; }
.mini button { flex: 1; font-weight: 500; }
.mini button + button { border-left: 1px solid #2f2f2f; }
.mini + .vol { margin-left: 5px; }
.pan { width: 28px; margin: 8px 11px 0 0; fill: #727272; }
.sel-t .pan { fill: #b0b0b0; }
.pan small { display: flex; justify-content: space-between; padding: 0 3px; margin-top: -2px; font-size: 7px; line-height: 8px; color: #bbb; }
.foot { height: 13px; margin-top: auto; background: #2f2f2f; border-top: 1px solid #000; }
.lanes { position: relative; background: #282828; overflow: hidden; }
.ruler { display: flex; height: 36px; padding: 2px 0 0 9px; border-bottom: 1px solid #000; overflow: hidden; font-weight: 500; color: #ccc;
  background:
    linear-gradient(90deg, #555 1px, transparent 1px) 9px 27px / 12px 8px repeat-x,
    linear-gradient(90deg, #666 1px, transparent 1px) 9px 21px / 48px 14px repeat-x,
    linear-gradient(#1a1a1a, #1a1a1a) 0 17px / 100% 1px no-repeat,
    linear-gradient(#434343, #434343) 0 0 / 202px 17px no-repeat,
    #2c2c2c; }
.ruler span { flex: 0 0 96px; padding-left: 3px; line-height: 12px; border-left: 1px solid #5c5c5c; }
.lane { height: 49px; border-bottom: 1px solid #202020; background: linear-gradient(90deg, #3b3b3b 1px, transparent 1px) 9px 0 / 48px 100%, #2a2a2a; }
.lane + .lane { background-color: #2e2e2e; }
.playhead { position: absolute; left: 9px; top: 18px; bottom: 16px; width: 1px; background: #fff; }
.playhead svg { position: absolute; left: -7px; top: 0; }
.thumb { display: block; border-radius: 4px; background: #757575; }
.foot .thumb { width: 21.500%; height: 8px; margin: 3px 0 0 3px; }
.vbar { width: 14px; background: #2f2f2f; border-left: 1px solid #000; }

/* mixer */
.mixer { border: 1px solid #050505; border-radius: 5px 5px 10px 4px; overflow: hidden; background: #565656; }
.mixer .bar { height: 29px; padding: 1px 7px 0 8px; }
.mixer .bar label { margin: 0 -2px 0 3px; }
.send { width: 150px; }
.send button { width: 31px; }
.send .sel { flex: 1; background-color: transparent; }
.tabs button { width: 74px; }
.tabs .t3 { width: 61px; }
.filt button { padding: 0 13px; }
.mbody { display: flex; height: 393px; }
.mview { flex: 1; display: flex; align-items: flex-end; overflow: hidden; }
.mlabels, .mstrip { display: grid; grid-template-rows: 23px 23px 28px 34px 42px 33px 148px 20px 22px 25px; flex: none; align-items: start; font-size: 11px; font-weight: 500; }
.mlabels { width: 92px; background: #464646; border-right: 1px solid #000; color: #b5b5b5; justify-items: end; line-height: 18px; }
.mlabels span { padding-right: 7px; }
.mlabels span:nth-child(5) { line-height: 34px; }
.mlabels svg { margin-right: -5px; }
.mstrip { width: 67px; grid-template-columns: 58px; padding: 0 4px; border-right: 1px solid #404040; background: #565656; }
.mstrip.lit { background: #7b7b7b; }
.lit .box { background: #6a6a6a; border-color: #5a5a5a; }
.mstrip .ic { justify-self: center; }
.mstrip .ri { width: 28px; }
.mstrip .db { margin: 0 1px; }
.fader.mid { padding-left: 16px; }
.mstrip h3 { margin: 0 -4px; border-top: 1px solid #404040; height: 25px; line-height: 22px; text-align: center; font-size: 10px; font-weight: 600; white-space: nowrap; background-clip: padding-box; }
.mstrip h3.lat { font-size: 11px; }
.blue { background: #2f64a2; }
.pink { background: #98197c; }
.violet { background: #5b32a5; }
.mixer .vbar { width: 15px; padding: 127px 0 3px 3px; }
.mixer .vbar .thumb { width: 8px; height: 100%; }
.mfoot { height: 14px; background: #2f2f2f; border-top: 1px solid #000; }
```
